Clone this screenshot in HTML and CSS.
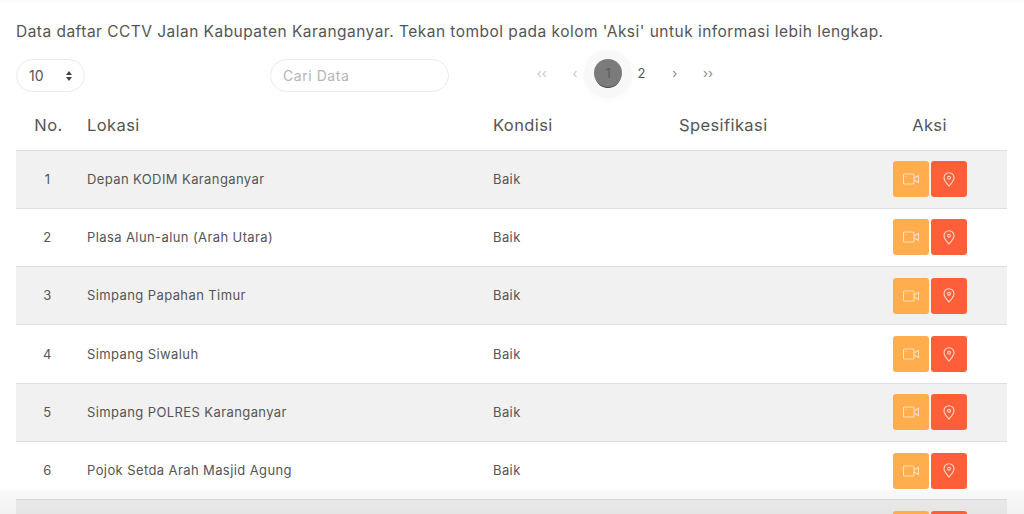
FILE: index.html
```html
<!DOCTYPE html>
<html lang="id">
<head>
<meta charset="utf-8">
<title>Data CCTV</title>
<link rel="stylesheet" href="styles.css">
</head>
<body>
<svg class="defs" width="0" height="0" aria-hidden="true">
  <symbol id="cam" viewBox="0 0 16 12"><g fill="none" stroke="currentColor" stroke-width="1.1"><rect x="0.5" y="1" width="10.500" height="10" rx="1"/><path d="M11 5 15.500 2.500v7L11 7"/><path d="M2.500 3.500h1"/></g></symbol>
  <symbol id="pin" viewBox="0 0 12 15"><g fill="none" stroke="currentColor" stroke-width="1.1"><path d="M6 14C3.500 11 1 8.500 1 5.700A5 5 0 0 1 11 5.700C11 8.500 8.500 11 6 14Z"/><circle cx="6" cy="5.700" r="1.400"/></g></symbol>
</svg>
<main class="page">
  <p class="intro">Data daftar CCTV Jalan Kabupaten Karanganyar. Tekan tombol pada kolom 'Aksi' untuk informasi lebih lengkap.</p>
  <div class="controls">
    <div class="select">10<span class="arrows"><i class="up"></i><i class="down"></i></span></div>
    <div class="search">Cari Data</div>
    <nav class="pager">
      <span class="pg muted">‹‹</span>
      <span class="pg muted">‹</span>
      <span class="pg active">1</span>
      <span class="pg">2</span>
      <span class="pg dim">›</span>
      <span class="pg dim">››</span>
    </nav>
  </div>
  <table class="tbl">
    <colgroup><col class="c1"><col class="c2"><col class="c3"><col class="c4"><col class="c5"></colgroup>
    <thead><tr><th class="ctr">No.</th><th>Lokasi</th><th>Kondisi</th><th>Spesifikasi</th><th class="ctr">Aksi</th></tr></thead>
    <tbody>
      <tr><td class="ctr">1</td><td>Depan KODIM Karanganyar</td><td>Baik</td><td></td><td><div class="acts"><a class="btn cam"><svg width="16" height="12"><use href="#cam"/></svg></a><a class="btn loc"><svg width="12" height="15"><use href="#pin"/></svg></a></div></td></tr>
      <tr><td class="ctr">2</td><td>Plasa Alun-alun (Arah Utara)</td><td>Baik</td><td></td><td><div class="acts"><a class="btn cam"><svg width="16" height="12"><use href="#cam"/></svg></a><a class="btn loc"><svg width="12" height="15"><use href="#pin"/></svg></a></div></td></tr>
      <tr><td class="ctr">3</td><td>Simpang Papahan Timur</td><td>Baik</td><td></td><td><div class="acts"><a class="btn cam"><svg width="16" height="12"><use href="#cam"/></svg></a><a class="btn loc"><svg width="12" height="15"><use href="#pin"/></svg></a></div></td></tr>
      <tr><td class="ctr">4</td><td>Simpang Siwaluh</td><td>Baik</td><td></td><td><div class="acts"><a class="btn cam"><svg width="16" height="12"><use href="#cam"/></svg></a><a class="btn loc"><svg width="12" height="15"><use href="#pin"/></svg></a></div></td></tr>
      <tr><td class="ctr">5</td><td>Simpang POLRES Karanganyar</td><td>Baik</td><td></td><td><div class="acts"><a class="btn cam"><svg width="16" height="12"><use href="#cam"/></svg></a><a class="btn loc"><svg width="12" height="15"><use href="#pin"/></svg></a></div></td></tr>
      <tr><td class="ctr">6</td><td>Pojok Setda Arah Masjid Agung</td><td>Baik</td><td></td><td><div class="acts"><a class="btn cam"><svg width="16" height="12"><use href="#cam"/></svg></a><a class="btn loc"><svg width="12" height="15"><use href="#pin"/></svg></a></div></td></tr>
      <tr><td></td><td></td><td></td><td></td><td><div class="acts"><a class="btn cam"></a><a class="btn loc"></a></div></td></tr>
    </tbody>
  </table>
</main>
<div class="fade"></div>
</body>
</html>
```
FILE: styles.css
```css
* { box-sizing: border-box; }
html, body { margin: 0; height: 514px; overflow: hidden; background: #fff; }
body { font-family: "Inter", "Liberation Sans", sans-serif; color: #555; position: relative; border-top: 2px solid #fafafa; }
.defs { position: absolute; }
.page { padding: 0 17px 0 16px; }
.intro { margin: 0; padding-top: 20px; height: 57px; font-size: 15.500px; line-height: 19px; color: #555; letter-spacing: 0.47px; }
.controls { display: flex; align-items: flex-start; height: 46px; }
.select { width: 69px; height: 33px; border: 1px solid #eaeaea; border-radius: 17px; display: flex; align-items: center; justify-content: space-between; padding: 0 12px 0 12px; font-size: 14px; color: #555; }
.arrows { display: flex; flex-direction: column; gap: 2px; }
.arrows i { display: block; width: 0; height: 0; border-left: 3.500px solid transparent; border-right: 3.500px solid transparent; }
.up { border-bottom: 4px solid #444; }
.down { border-top: 4px solid #444; }
.search { width: 179px; height: 33px; margin-left: 185px; border: 1px solid #eaeaea; border-radius: 17px; padding-left: 12px; display: flex; align-items: center; font-size: 14px; letter-spacing: 0.55px; color: #b5b5b5; }
.pager { display: flex; margin-left: 76px; align-items: center; height: 28px; }
.pg { width: 33.300px; text-align: center; font-size: 13px; color: #555; }
.pg.muted { color: #c8c8c8; }
.pg.dim { color: #888; }
.pg.active { width: 28px; height: 28px; margin: 0 2.650px; border-radius: 50%; background: #7b7b7b; color: #5c5c5c; line-height: 28px; box-shadow: 0 2px 0 -1px #444, 0 1px 0 10px #f8f8f8, 0 2px 6px 12px #fbfbfb; }
.tbl { width: 991px; border-collapse: collapse; table-layout: fixed; }
.c1 { width: 63px; } .c2 { width: 406px; } .c3 { width: 186px; } .c4 { width: 181px; } .c5 { width: 155px; }
th { height: 45px; padding: 0 8px 5px; font-weight: 400; font-size: 16.500px; letter-spacing: 0.4px; text-align: left; color: #555; }
th.ctr:first-child { padding-left: 10px; padding-right: 8px; }
td { height: 58.300px; padding: 0 8px 1px; font-size: 13px; letter-spacing: 0.4px; color: #555; border-top: 1px solid #dedede; }
.ctr { text-align: center; }
tbody tr:nth-child(odd) td { background: #f1f1f1; }
.acts { display: flex; justify-content: center; gap: 2px; padding-top: 1px; }
.btn { width: 36px; height: 36px; border-radius: 3px; display: flex; align-items: center; justify-content: center; color: #ffe0b8; position: relative; z-index: 2; }
.cam { background: #ffad4d; }
.loc { background: #ff5f38; color: #ffd8cc; }
.fade { position: absolute; left: 0; right: 0; bottom: 0; height: 24px; z-index: 1; background: linear-gradient(rgba(0,0,0,0.025), rgba(0,0,0,0.05)); }
```
